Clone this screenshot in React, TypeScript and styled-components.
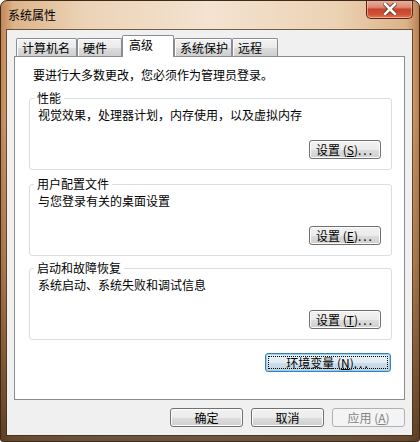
import React from "react";
import styled, { createGlobalStyle } from "styled-components";

const Global = createGlobalStyle`
  html, body { margin: 0; padding: 0; background: #ffffff; }
  body { font-family: "Noto Sans CJK SC", "Liberation Sans", sans-serif; font-size: 12px; }
`;

const FONT = `"Noto Sans CJK SC", "Liberation Sans", sans-serif`;

const Frame = styled.div`
  box-sizing: border-box;
  width: 420px;
  height: 442px;
  display: flex;
  flex-direction: column;
  border: 1px solid #3d2a18;
  border-radius: 7px 7px 3px 3px;
  overflow: hidden;
  background:
    linear-gradient(to bottom, rgba(255,255,255,0) 0%, rgba(255,255,255,0) 25%, rgba(110,70,35,0.35) 60%, rgba(60,38,18,0.75) 100%),
    linear-gradient(to right, #c08658 0%, #ddb48a 3%, #ecd3b6 20%, #f3e3d1 50%, #ecd2b4 80%, #dbb38a 97%, #b98052 100%);
  font-family: ${FONT};
`;

const TitleBar = styled.div`
  height: 29px;
  display: flex;
  align-items: flex-start;
  justify-content: space-between;
  flex-shrink: 0;
`;

const Title = styled.div`
  margin: 7px 0 0 7px;
  font-size: 12px;
  line-height: 14px;
  color: #000;
`;

const CloseBtn = styled.div`
  box-sizing: border-box;
  width: 47px;
  height: 19px;
  margin: -1px 6px 0 0;
  border: 1px solid #5e2418;
  border-top: none;
  border-radius: 0 0 5px 5px;
  background: linear-gradient(to bottom, #eab2a2 0%, #dc8a74 40%, #c8452c 52%, #cf5236 80%, #e27a58 100%);
  box-shadow: inset 0 0 0 1px rgba(255, 210, 190, 0.55);
  display: flex;
  align-items: center;
  justify-content: center;
`;

const Client = styled.div`
  box-sizing: border-box;
  width: 405px;
  height: 405px;
  margin-left: 6px;
  background: #f0f0f0;
  outline: 1px solid rgba(60, 40, 20, 0.7);
  padding: 5px 7px 0 7px;
  display: flex;
  flex-direction: column;
`;

const TabStrip = styled.div`
  display: flex;
  align-items: flex-end;
  height: 21px;
  padding-left: 2px;
  flex-shrink: 0;
`;

const Tab = styled.div<{ $w: number; $active?: boolean }>`
  box-sizing: border-box;
  width: ${(p) => p.$w}px;
  height: ${(p) => (p.$active ? 22 : 18)}px;
  margin-bottom: ${(p) => (p.$active ? -1 : 0)}px;
  position: relative;
  z-index: ${(p) => (p.$active ? 2 : 0)};
  border: 1px solid #898c95;
  border-bottom: none;
  border-radius: 2px 2px 0 0;
  background: ${(p) =>
    p.$active
      ? "#ffffff"
      : "linear-gradient(to bottom, #f2f2f2 0%, #ebebeb 50%, #dddddd 51%, #cfcfcf 100%)"};
  box-shadow: ${(p) => (p.$active ? "none" : "inset 1px 1px 0 #ffffff")};
  padding: ${(p) => (p.$active ? "2px 0 0 6px" : "2px 0 0 5px")};
  font-size: 12px;
  line-height: 14px;
  color: #000;
  white-space: nowrap;
`;

const Panel = styled.div`
  box-sizing: border-box;
  width: 391px;
  height: 344px;
  background: #ffffff;
  border: 1px solid #898c95;
  display: flex;
  flex-direction: column;
  padding: 11px 12px 0 14px;
  flex-shrink: 0;
`;

const Intro = styled.div`
  font-size: 12px;
  line-height: 14px;
  color: #000;
  padding-left: 4px;
`;

const GroupBox = styled.div<{ $mt: number }>`
  box-sizing: border-box;
  height: 72px;
  margin-top: ${(p) => p.$mt}px;
  border: 1px solid #d5dfe5;
  border-radius: 3px;
  display: flex;
  flex-direction: column;
  padding: 0 10px 10px 0;
`;

const Legend = styled.div`
  align-self: flex-start;
  margin: -8px 0 0 4px;
  padding: 0 3px;
  background: #ffffff;
  font-size: 12px;
  line-height: 14px;
  color: #000;
`;

const Desc = styled.div`
  margin: 3px 0 0 8px;
  font-size: 12px;
  line-height: 14px;
  color: #000;
`;

type BtnKind = "normal" | "default" | "disabled";

const Button = styled.div<{ $w: number; $kind?: BtnKind }>`
  box-sizing: border-box;
  position: relative;
  width: ${(p) => p.$w}px;
  height: 19px;
  border-radius: 3px;
  border: 1px solid
    ${(p) => (p.$kind === "default" ? "#3c7fb1" : p.$kind === "disabled" ? "#adb2b5" : "#707070")};
  background: ${(p) =>
    p.$kind === "default"
      ? "linear-gradient(to bottom, #eaf2f7 0%, #e1ecf3 50%, #cfdfea 51%, #bfd4e2 100%)"
      : p.$kind === "disabled"
      ? "#f4f4f4"
      : "linear-gradient(to bottom, #f2f2f2 0%, #ebebeb 50%, #dddddd 51%, #cfcfcf 100%)"};
  box-shadow: ${(p) =>
    p.$kind === "default"
      ? "inset 0 0 0 1px #8fd0f5"
      : p.$kind === "disabled"
      ? "none"
      : "inset 0 0 0 1px #fcfcfc"};
  color: ${(p) => (p.$kind === "disabled" ? "#838383" : "#000")};
  font-size: 12px;
  line-height: 17px;
  text-align: center;
  white-space: nowrap;
  flex-shrink: 0;
  &::after {
    content: "";
    display: ${(p) => (p.$kind === "default" ? "block" : "none")};
    position: absolute;
    inset: 2px;
    border: 1px dotted #000;
    pointer-events: none;
  }
`;

const Dots = styled.span`
  letter-spacing: 2px;
`;

const BoxButtonRow = styled.div`
  margin-top: auto;
  display: flex;
  justify-content: flex-end;
`;

const EnvRow = styled.div`
  margin-top: 13px;
  padding-right: 1px;
  display: flex;
  justify-content: flex-end;
`;

const Footer = styled.div`
  margin-top: 8px;
  display: flex;
  justify-content: flex-end;
  gap: 8px;
`;

const Mn = styled.span`
  text-decoration: underline;
`;

const CloseIcon = () => (
  <svg width="14" height="12" viewBox="0 0 14 12">
    <path d="M2 1 L12 11 M12 1 L2 11" stroke="#6a3326" strokeWidth="4.4" strokeLinecap="square" />
    <path d="M2 1 L12 11 M12 1 L2 11" stroke="#ffffff" strokeWidth="2.6" strokeLinecap="square" />
  </svg>
);

const tabs = [
  { label: "计算机名", w: 61 },
  { label: "硬件", w: 45 },
  { label: "高级", w: 52, active: true },
  { label: "系统保护", w: 58 },
  { label: "远程", w: 46 },
];

const groups = [
  { title: "性能", desc: "视觉效果，处理器计划，内存使用，以及虚拟内存", key: "S", mt: 16 },
  { title: "用户配置文件", desc: "与您登录有关的桌面设置", key: "E", mt: 14 },
  { title: "启动和故障恢复", desc: "系统启动、系统失败和调试信息", key: "T", mt: 12 },
];

export default function App() {
  return (
    <>
      <Global />
      <Frame>
        <TitleBar>
          <Title>系统属性</Title>
          <CloseBtn>
            <CloseIcon />
          </CloseBtn>
        </TitleBar>
        <Client>
          <TabStrip>
            {tabs.map((t) => (
              <Tab key={t.label} $w={t.w} $active={t.active}>
                {t.label}
              </Tab>
            ))}
          </TabStrip>
          <Panel>
            <Intro>要进行大多数更改，您必须作为管理员登录。</Intro>
            {groups.map((g) => (
              <GroupBox key={g.title} $mt={g.mt}>
                <Legend>{g.title}</Legend>
                <Desc>{g.desc}</Desc>
                <BoxButtonRow>
                  <Button $w={72}>
                    设置 (<Mn>{g.key}</Mn>)<Dots>...</Dots>
                  </Button>
                </BoxButtonRow>
              </GroupBox>
            ))}
            <EnvRow>
              <Button $w={126} $kind="default">
                环境变量 (<Mn>N</Mn>)<Dots>...</Dots>
              </Button>
            </EnvRow>
          </Panel>
          <Footer>
            <Button $w={73}>确定</Button>
            <Button $w={73}>取消</Button>
            <Button $w={73} $kind="disabled">
              应用 (<Mn>A</Mn>)
            </Button>
          </Footer>
        </Client>
      </Frame>
    </>
  );
}
